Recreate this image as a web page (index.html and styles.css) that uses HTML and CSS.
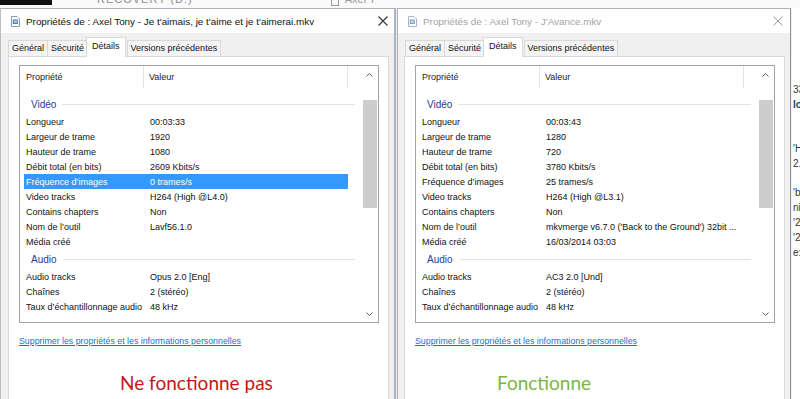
FILE: index.html
```html
<!DOCTYPE html>
<html lang="fr">
<head>
<meta charset="utf-8">
<title>Propriétés</title>
<link rel="stylesheet" href="styles.css">
</head>
<body>
<div class="desk">
  <div class="strip">
    <span class="strip-black"></span>
    <span class="strip-text">RECOVERY (D:)</span>
    <span class="strip-check"></span>
    <span class="strip-text2">Axel T</span>
  </div>
  <div class="wins">
    <section class="win win-a">
      <header class="titlebar">
        <svg class="ticon" width="9" height="11" viewBox="0 0 9 11"><path d="M0.5 0.5h5.5l2.5 2.5v7.5h-8z" fill="#fff" stroke="#8a9bb0"/><rect x="1.8" y="3.5" width="5" height="4.5" fill="#3d6fb8"/><rect x="2.6" y="4.3" width="3.4" height="2.9" fill="#9cc3ec"/></svg>
        <span class="title">Propriétés de : Axel Tony - Je t'aimais, je t'aime et je t'aimerai.mkv</span>
        <svg class="close" width="10" height="10" viewBox="0 0 10 10"><path d="M0.5 0.5l9 9M9.5 0.5l-9 9" stroke="#333" stroke-width="1.1"/></svg>
      </header>
      <div class="body">
        <nav class="tabs">
          <span class="tab">Général</span>
          <span class="tab">Sécurité</span>
          <span class="tab tab-sel">Détails</span>
          <span class="tab">Versions précédentes</span>
        </nav>
        <div class="panel">
          <div class="listbox">
            <div class="list">
              <div class="lhead"><span class="hc hc1">Propriété</span><span class="hc hc2">Valeur</span><span class="hc hc3"></span></div>
              <div class="cutrow"><span>Sous-titre</span></div>
              <div class="group"><span>Vidéo</span><i></i></div>
              <div class="row"><span class="k">Longueur</span><span class="v">00:03:33</span></div>
              <div class="row"><span class="k">Largeur de trame</span><span class="v">1920</span></div>
              <div class="row"><span class="k">Hauteur de trame</span><span class="v">1080</span></div>
              <div class="row"><span class="k">Débit total (en bits)</span><span class="v">2609 Kbits/s</span></div>
              <div class="row row-sel"><span class="k">Fréquence d’images</span><span class="v">0 trames/s</span></div>
              <div class="row"><span class="k">Video tracks</span><span class="v">H264 (High @L4.0)</span></div>
              <div class="row"><span class="k">Contains chapters</span><span class="v">Non</span></div>
              <div class="row"><span class="k">Nom de l’outil</span><span class="v">Lavf56.1.0</span></div>
              <div class="row"><span class="k">Média créé</span><span class="v"></span></div>
              <div class="group"><span>Audio</span><i></i></div>
              <div class="row"><span class="k">Audio tracks</span><span class="v">Opus 2.0 [Eng]</span></div>
              <div class="row"><span class="k">Chaînes</span><span class="v">2 (stéréo)</span></div>
              <div class="row"><span class="k">Taux d’échantillonnage audio</span><span class="v">48 kHz</span></div>
            </div>
            <div class="sbar">
              <div class="sb-btn"><svg width="7" height="4" viewBox="0 0 7 4"><path d="M0.5 3.5l3-3 3 3" fill="none" stroke="#606060"/></svg></div>
              <div class="sb-track"><div class="sb-thumb"></div></div>
              <div class="sb-btn"><svg width="7" height="4" viewBox="0 0 7 4"><path d="M0.5 0.5l3 3 3-3" fill="none" stroke="#606060"/></svg></div>
            </div>
          </div>
          <a class="link">Supprimer les propriétés et les informations personnelles</a>
          <div class="verdict verdict-bad">Ne fonctionne pas</div>
        </div>
      </div>
    </section>
    <div class="gap"></div>
    <section class="win win-b">
      <header class="titlebar">
        <svg class="ticon" width="9" height="11" viewBox="0 0 9 11"><path d="M0.5 0.5h5.5l2.5 2.5v7.5h-8z" fill="#fff" stroke="#a8b4c2"/><rect x="1.8" y="3.5" width="5" height="4.5" fill="#6f93c8"/><rect x="2.6" y="4.3" width="3.4" height="2.9" fill="#b9d3f0"/></svg>
        <span class="title title-off">Propriétés de : Axel Tony - J'Avance.mkv</span>
        <svg class="close close-off" width="10" height="10" viewBox="0 0 10 10"><path d="M0.5 0.5l9 9M9.5 0.5l-9 9" stroke="#9a9a9a" stroke-width="1"/></svg>
      </header>
      <div class="body">
        <nav class="tabs">
          <span class="tab">Général</span>
          <span class="tab">Sécurité</span>
          <span class="tab tab-sel">Détails</span>
          <span class="tab">Versions précédentes</span>
        </nav>
        <div class="panel panel-b">
          <div class="listbox">
            <div class="list">
              <div class="lhead"><span class="hc hc1">Propriété</span><span class="hc hc2">Valeur</span><span class="hc hc3"></span></div>
              <div class="cutrow"><span>Sous-titre</span></div>
              <div class="group"><span>Vidéo</span><i></i></div>
              <div class="row"><span class="k">Longueur</span><span class="v">00:03:43</span></div>
              <div class="row"><span class="k">Largeur de trame</span><span class="v">1280</span></div>
              <div class="row"><span class="k">Hauteur de trame</span><span class="v">720</span></div>
              <div class="row"><span class="k">Débit total (en bits)</span><span class="v">3780 Kbits/s</span></div>
              <div class="row"><span class="k">Fréquence d’images</span><span class="v">25 trames/s</span></div>
              <div class="row"><span class="k">Video tracks</span><span class="v">H264 (High @L3.1)</span></div>
              <div class="row"><span class="k">Contains chapters</span><span class="v">Non</span></div>
              <div class="row"><span class="k">Nom de l’outil</span><span class="v">mkvmerge v6.7.0 ('Back to the Ground') 32bit ...</span></div>
              <div class="row"><span class="k">Média créé</span><span class="v">16/03/2014 03:03</span></div>
              <div class="group"><span>Audio</span><i></i></div>
              <div class="row"><span class="k">Audio tracks</span><span class="v">AC3 2.0 [Und]</span></div>
              <div class="row"><span class="k">Chaînes</span><span class="v">2 (stéréo)</span></div>
              <div class="row"><span class="k">Taux d’échantillonnage audio</span><span class="v">48 kHz</span></div>
            </div>
            <div class="sbar">
              <div class="sb-btn"><svg width="7" height="4" viewBox="0 0 7 4"><path d="M0.5 3.5l3-3 3 3" fill="none" stroke="#606060"/></svg></div>
              <div class="sb-track"><div class="sb-thumb"></div></div>
              <div class="sb-btn"><svg width="7" height="4" viewBox="0 0 7 4"><path d="M0.5 0.5l3 3 3-3" fill="none" stroke="#606060"/></svg></div>
            </div>
          </div>
          <a class="link">Supprimer les propriétés et les informations personnelles</a>
          <div class="verdict verdict-good">Fonctionne</div>
        </div>
      </div>
    </section>
    <div class="sliver">
      <span class="sl sl1">33</span>
      <span class="sl sl2">lo</span>
      <span class="sl sl3">'H</span>
      <span class="sl">2.(</span>
      <span class="sl sl5">'b</span>
      <span class="sl">ni</span>
      <span class="sl">'2(</span>
      <span class="sl">'2(</span>
      <span class="sl">e:</span>
    </div>
  </div>
</div>
</body>
</html>
```
FILE: styles.css
```css
* { box-sizing: border-box; }
html, body { margin: 0; padding: 0; }
body {
  width: 800px;
  height: 399px;
  overflow: hidden;
  background: #fff;
  font-family: "Liberation Sans", Arial, sans-serif;
  font-size: 9px;
  color: #111;
}
.desk { display: flex; flex-direction: column; height: 399px; }

.strip {
  height: 8px;
  display: flex;
  align-items: flex-start;
  overflow: hidden;
  background: #fafafa;
}
.strip-black { width: 52px; height: 5px; background: #111; flex: none; }
.strip-text { margin-left: 45px; margin-top: -7px; font-size: 11px; color: #8a8a8a; letter-spacing: 1px; white-space: nowrap; }
.strip-check { margin-left: 138px; width: 8px; height: 6px; border: 1px solid #999; border-top: none; flex: none; }
.strip-text2 { margin-left: 6px; margin-top: -7px; font-size: 11px; color: #999; white-space: nowrap; }

.wins { flex: 1; display: flex; min-height: 0; }
.win {
  display: flex;
  flex-direction: column;
  background: #f0f0f0;
  border-top: 1px solid #a9b1bb;
  flex: none;
}
.win-a { width: 396px; border-left: 1px solid #bdbdbd; border-right: 2px solid #a7b6ca; }
.gap { width: 1px; background: #e9e9e9; flex: none; }
.win-b { width: 394px; border-left: 1px solid #b3b3b3; border-right: 1px solid #8f8f8f; }

.titlebar {
  height: 24px;
  flex: none;
  display: flex;
  align-items: center;
  background: #fff;
  padding-left: 10px;
  padding-right: 6px;
}
.win-b .titlebar { padding-right: 7px; }
.ticon { flex: none; }
.title { margin-left: 6px; font-size: 9.9px; color: #111; white-space: nowrap; }
.title-off { color: #a3a3a3; }
.close { margin-left: auto; flex: none; }

.body { flex: 1; display: flex; flex-direction: column; padding-top: 4px; min-height: 0; }
.tabs {
  display: flex;
  align-items: flex-end;
  height: 19px;
  padding-left: 7px;
  flex: none;
}
.tab {
  height: 16px;
  line-height: 15px;
  padding: 0 3px;
  border: 1px solid #d9d9d9;
  border-bottom: none;
  margin-right: -1px;
  background: #f4f4f4;
  color: #111;
  white-space: nowrap;
}
.tab-sel {
  position: relative;
  z-index: 1;
  height: 20px;
  line-height: 16px;
  margin: 0 1px -1px -1px;
  padding: 0 5px;
  background: #fff;
}

.panel {
  flex: 1;
  margin: 0 5px 0 7px;
  background: #fff;
  border: 1px solid #d9d9d9;
  border-bottom: none;
  padding: 8px 9px 0 10px;
}
.panel-b { margin-left: 6px; }

.listbox {
  width: 360px;
  height: 258px;
  border: 1px solid #a3a3a3;
  display: flex;
  overflow: hidden;
}
.list { flex: 1; min-width: 0; }
.lhead { display: flex; height: 22px; align-items: stretch; }
.hc { line-height: 22px; border-right: 1px solid #e3e3e3; color: #222; }
.hc1 { width: 124px; padding-left: 6px; }
.hc2 { width: 204px; padding-left: 5px; }
.hc3 { flex: 1; border-right: none; }

.cutrow { height: 6px; overflow: hidden; padding-left: 6px; color: #555; }
.cutrow span { display: block; line-height: 15px; margin-top: -10px; }

.group { height: 20px; display: flex; align-items: center; padding-left: 11px; padding-right: 6px; }
.group span { color: #1f3d92; font-size: 10px; }
.group i { flex: 1; height: 1px; background: #e3e3e3; margin-left: 6px; }

.row {
  display: flex;
  height: 15px;
  line-height: 16px;
  width: 324px;
  margin-left: 4px;
  white-space: nowrap;
}
.row .k { width: 120px; padding-left: 2px; flex: none; overflow: hidden; }
.row .v { padding-left: 6px; overflow: hidden; flex: 1; }
.row-sel { background: #3399ff; color: #fff; }

.sbar { width: 17px; flex: none; display: flex; flex-direction: column; }
.sb-btn { height: 17px; display: flex; align-items: center; justify-content: center; flex: none; }
.sb-track { flex: 1; }
.sb-thumb { margin: 17px 1px 0 2px; height: 108px; background: #cdcdcd; }

.link {
  display: block;
  margin-top: 12px;
  line-height: 12px;
  font-size: 8.8px;
  color: #1a6fd1;
  text-decoration: underline;
  white-space: nowrap;
}
.verdict {
  margin-top: 24px;
  font-family: Lato, "Open Sans", sans-serif;
  font-size: 19px;
  line-height: 24px;
  white-space: nowrap;
}
.verdict-bad { margin-left: 101px; color: #c4161c; }
.verdict-good { margin-left: 82px; color: #7bb544; }

.sliver {
  flex: 1;
  background: #fff;
  display: flex;
  flex-direction: column;
  padding-top: 74px;
  padding-left: 1px;
  font-size: 10px;
  line-height: 15px;
  color: #333;
  overflow: hidden;
  white-space: nowrap;
  border-left: 1px solid #f0f0f0;
}
.sl2 { font-weight: bold; color: #2b3d5a; }
.sl3 { margin-top: 29px; }
.sl5 { margin-top: 14px; }
```
